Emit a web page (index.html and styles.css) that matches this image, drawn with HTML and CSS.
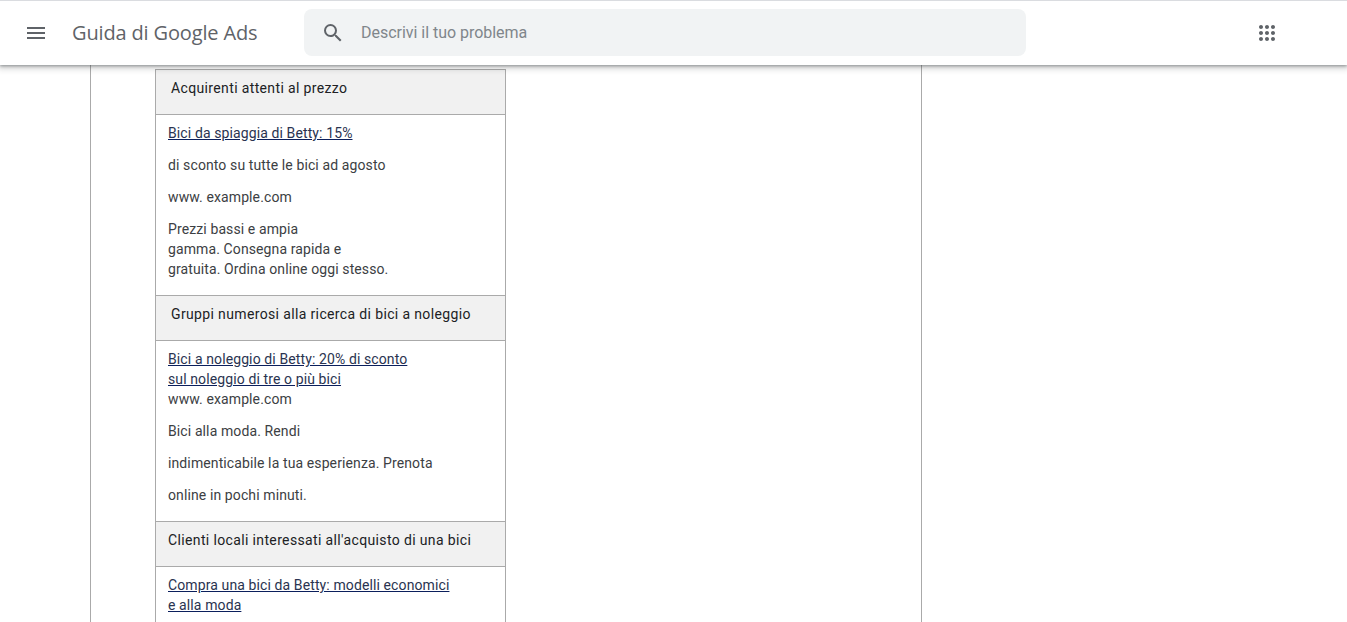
FILE: index.html
```html
<!DOCTYPE html>
<html lang="it">
<head>
<meta charset="utf-8">
<title>Guida di Google Ads</title>
<link rel="stylesheet" href="styles.css">
</head>
<body>
<header class="topbar">
  <div class="menu-btn">
    <svg class="icon" viewBox="0 0 24 24"><path d="M3 18h18v-2H3v2zm0-5h18v-2H3v2zm0-7v2h18V6H3z"/></svg>
  </div>
  <div class="product">Guida di Google Ads</div>
  <div class="search">
    <svg class="icon" viewBox="0 0 24 24"><path d="M15.5 14h-.79l-.28-.27A6.471 6.471 0 0 0 16 9.5 6.5 6.5 0 1 0 9.5 16c1.61 0 3.09-.59 4.23-1.57l.27.28v.79l5 4.99L20.49 19l-4.99-5zm-6 0C7.01 14 5 11.99 5 9.5S7.01 5 9.5 5 14 7.01 14 9.5 11.99 14 9.5 14z"/></svg>
    <span class="placeholder">Descrivi il tuo problema</span>
  </div>
  <div class="apps">
    <svg class="icon" viewBox="0 0 24 24"><path d="M6 8c1.1 0 2-.9 2-2s-.9-2-2-2-2 .9-2 2 .9 2 2 2zm6 12c1.1 0 2-.9 2-2s-.9-2-2-2-2 .9-2 2 .9 2 2 2zm-6 0c1.1 0 2-.9 2-2s-.9-2-2-2-2 .9-2 2 .9 2 2 2zm0-6c1.1 0 2-.9 2-2s-.9-2-2-2-2 .9-2 2 .9 2 2 2zm6 0c1.1 0 2-.9 2-2s-.9-2-2-2-2 .9-2 2 .9 2 2 2zm4-8c0 1.1.9 2 2 2s2-.9 2-2-.9-2-2-2-2 .9-2 2zm-4 2c1.1 0 2-.9 2-2s-.9-2-2-2-2 .9-2 2 .9 2 2 2zm6 6c1.1 0 2-.9 2-2s-.9-2-2-2-2 .9-2 2 .9 2 2 2zm0 6c1.1 0 2-.9 2-2s-.9-2-2-2-2 .9-2 2 .9 2 2 2z"/></svg>
  </div>
</header>
<main class="article">
  <table class="ads">
    <tbody>
      <tr>
        <th class="indented">Acquirenti attenti al prezzo</th>
      </tr>
      <tr>
        <td>
          <p><a href="#">Bici da spiaggia di Betty: 15%</a></p>
          <p>di sconto su tutte le bici ad agosto</p>
          <p>www. example.com</p>
          <p>Prezzi bassi e ampia<br>gamma. Consegna rapida e<br>gratuita. Ordina online oggi stesso.</p>
        </td>
      </tr>
      <tr>
        <th class="indented">Gruppi numerosi alla ricerca di bici a noleggio</th>
      </tr>
      <tr>
        <td>
          <p class="tight"><a href="#">Bici a noleggio di Betty: 20% di sconto<br>sul noleggio di tre o più bici</a></p>
          <p>www. example.com</p>
          <p>Bici alla moda. Rendi</p>
          <p>indimenticabile la tua esperienza. Prenota</p>
          <p>online in pochi minuti.</p>
        </td>
      </tr>
      <tr>
        <th>Clienti locali interessati all'acquisto di una bici</th>
      </tr>
      <tr>
        <td>
          <p class="tight"><a href="#">Compra una bici da Betty: modelli economici<br>e alla moda</a></p>
        </td>
      </tr>
    </tbody>
  </table>
</main>
</body>
</html>
```

FILE: styles.css
```css
* {
  box-sizing: border-box;
}

html,
body {
  height: 100%;
  margin: 0;
  overflow: hidden;
}

body {
  display: flex;
  flex-direction: column;
  background: #fff;
  color: #3c4043;
  font: 14px/20px Roboto, "Liberation Sans", sans-serif;
}

.topbar {
  position: relative;
  z-index: 2;
  flex: none;
  display: flex;
  align-items: center;
  height: 65px;
  padding-left: 24px;
  background: #fff;
  border-top: 1px solid #dadce0;
  box-shadow: 0 1px 3px rgba(60, 64, 67, .5), 0 2px 6px 2px rgba(60, 64, 67, .2);
}

.icon {
  display: block;
  width: 24px;
  height: 24px;
  fill: #5f6368;
}

.menu-btn {
  flex: none;
}

.product {
  flex: none;
  width: 232px;
  margin-left: 24px;
  color: #5f6368;
  font: 20px/24px "Open Sans", sans-serif;
  letter-spacing: -.15px;
}

.search {
  flex: none;
  display: flex;
  align-items: center;
  gap: 16px;
  width: 722px;
  height: 47px;
  margin-top: -1px;
  padding-left: 17px;
  background: #f1f3f4;
  border-radius: 8px;
}

.placeholder {
  color: #80868b;
  font-size: 16px;
  line-height: 24px;
  letter-spacing: -.03px;
}

.apps {
  flex: none;
  margin-left: 229px;
}

.article {
  flex: 1;
  width: 832px;
  margin-left: 90px;
  padding: 4px 0 0 64px;
  border-left: 1px solid #aaa;
  border-right: 1px solid #aaa;
}

.ads {
  width: 351px;
  border-collapse: collapse;
  letter-spacing: .11px;
}

.ads th,
.ads td {
  padding: 8px 12px 16px;
  border: 1px solid #aaa;
  text-align: left;
  vertical-align: top;
}

.ads th {
  background: #f1f1f1;
  color: #202124;
  font-weight: 400;
  letter-spacing: .36px;
}

.ads th.indented {
  padding-left: 15px;
}

.ads p {
  margin: 0 0 12px;
}

.ads p:last-child {
  margin-bottom: 0;
}

.ads p.tight {
  margin-bottom: 0;
}

.ads a {
  color: #2a3350;
  text-decoration-color: #0b1f5c;
}
```
